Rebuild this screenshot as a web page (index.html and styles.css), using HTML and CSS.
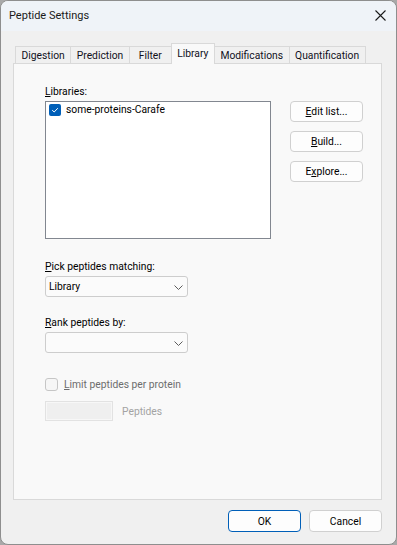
FILE: index.html
```html
<!DOCTYPE html>
<html lang="en">
<head>
  <meta charset="UTF-8" />
  <title>Peptide Settings</title>
  <link rel="stylesheet" href="styles.css">
</head>
<body>
  <div class="window">
    <div class="titlebar">
      <span class="title">Peptide Settings</span>
      <svg class="close" width="11" height="11" viewBox="0 0 11 11">
        <path d="M0.5 0.5 L10.5 10.5 M10.5 0.5 L0.5 10.5" stroke="#1a1a1a" stroke-width="1.1" fill="none"/>
      </svg>
    </div>
    <div class="content">
      <div class="tabs">
        <div class="tab">Digestion</div>
        <div class="tab">Prediction</div>
        <div class="tab">Filter</div>
        <div class="tab active">Library</div>
        <div class="tab">Modifications</div>
        <div class="tab">Quantification</div>
      </div>
      <div class="panel">
        <div class="label"><u>L</u>ibraries:</div>
        <div class="lib-row">
          <div class="listbox">
            <div class="list-item">
              <span class="check on">
                <svg width="12" height="12" viewBox="0 0 12 12"><path d="M3.2 6.2 L5.2 8 L8.8 4.2" stroke="#fff" stroke-width="1" fill="none"/></svg>
              </span>
              some-proteins-Carafe
            </div>
          </div>
          <div class="side-buttons">
            <button class="btn"><u>E</u>dit list...</button>
            <button class="btn"><u>B</u>uild...</button>
            <button class="btn">E<u>x</u>plore...</button>
          </div>
        </div>

        <div class="label pick"><u>P</u>ick peptides matching:</div>
        <div class="combo">
          <span>Library</span>
          <svg width="9" height="5" viewBox="0 0 9 5"><path d="M0.5 0.5 L4.5 4.5 L8.5 0.5" stroke="#5c5c5c" stroke-width="1" fill="none"/></svg>
        </div>

        <div class="label rank"><u>R</u>ank peptides by:</div>
        <div class="combo">
          <span></span>
          <svg width="9" height="5" viewBox="0 0 9 5"><path d="M0.5 0.5 L4.5 4.5 L8.5 0.5" stroke="#5c5c5c" stroke-width="1" fill="none"/></svg>
        </div>

        <div class="limit-row">
          <span class="check disabled"></span>
          <span class="disabled-text"><u>L</u>imit peptides per protein</span>
        </div>
        <div class="count-row">
          <div class="textbox"></div>
          <span class="muted">Peptides</span>
        </div>
      </div>
      <div class="footer">
        <button class="btn wide ok">OK</button>
        <button class="btn wide">Cancel</button>
      </div>
    </div>
  </div>
</body>
</html>
```

FILE: styles.css
```css
html, body {
  margin: 0;
  padding: 0;
  background-color: #a9a9a9;
}
body {
  font-family: "Segoe UI", Roboto, Arial, sans-serif;
  font-size: 10.3px;
  line-height: 13px;
  color: #000;
}
.window {
  width: 397px;
  height: 545px;
  box-sizing: border-box;
  border: 1px solid #8e8e8e;
  border-radius: 8px;
  background-color: #f0f0f0;
  overflow: hidden;
}
.titlebar {
  display: flex;
  justify-content: space-between;
  height: 30px;
  box-sizing: border-box;
  padding: 7px 10px 0 8px;
  background-color: #eff3f8;
}
.title {
  font-size: 11px;
  line-height: 16px;
  color: #1a1a1a;
}
.close {
  margin-top: 2px;
}
.content {
  padding: 12px 14px 0 12px;
}
.tabs {
  display: flex;
  align-items: flex-end;
  padding-left: 2px;
}
.tab {
  min-width: 43px;
  height: 17px;
  box-sizing: border-box;
  padding: 2px 5.5px 1px 5.5px;
  border: 1px solid #d9d9d9;
  border-bottom: none;
  margin-right: -1px;
  background-color: #f0f0f0;
  color: #10101c;
  text-align: center;
  white-space: nowrap;
}
.tab.active {
  position: relative;
  z-index: 1;
  height: 21px;
  padding-top: 3px;
  margin-bottom: -1px;
  background-color: #f9f9f9;
}
.panel {
  height: 437px;
  box-sizing: border-box;
  border: 1px solid #d9d9d9;
  background-color: #f9f9f9;
  padding: 21px 0 0 31px;
}
.label {
  margin-bottom: 3px;
}
.label.pick {
  margin-top: 21px;
}
.label.rank {
  margin-top: 19px;
}
.lib-row {
  display: flex;
  align-items: flex-start;
}
.listbox {
  width: 226px;
  height: 138px;
  box-sizing: border-box;
  border: 1px solid #828790;
  background-color: #fff;
  padding: 1px 3px;
}
.list-item {
  display: flex;
  align-items: center;
  gap: 5px;
}
.check {
  display: inline-block;
  width: 12px;
  height: 12px;
  box-sizing: border-box;
  border-radius: 2px;
}
.check.on {
  background-color: #005fb8;
}
.check.on svg {
  display: block;
}
.check.disabled {
  width: 13px;
  height: 13px;
  border: 1px solid #c6c6c6;
  border-radius: 3px;
  background-color: #f6f6f6;
}
.side-buttons {
  display: flex;
  flex-direction: column;
  gap: 9px;
  margin-left: 19px;
}
.btn {
  width: 73px;
  height: 21px;
  padding: 0;
  box-sizing: border-box;
  border: 1px solid #d0d0d0;
  border-radius: 4px;
  background-color: #fdfdfd;
  font-family: inherit;
  font-size: 10.3px;
  line-height: 13px;
  color: #000;
}
.btn.wide {
  height: 22px;
}
.btn.ok {
  border-color: #005fb8;
}
.combo {
  display: flex;
  align-items: center;
  justify-content: space-between;
  width: 143px;
  height: 21px;
  box-sizing: border-box;
  padding: 0 4px 0 3px;
  border: 1px solid #cdcdcd;
  border-radius: 3px;
  background-color: #fbfbfb;
}
.combo svg {
  margin-top: 1px;
}
.limit-row {
  display: flex;
  align-items: center;
  gap: 6px;
  margin-top: 25px;
}
.disabled-text {
  color: #6d6d6d;
}
.count-row {
  display: flex;
  align-items: center;
  gap: 9px;
  margin-top: 10px;
}
.textbox {
  width: 68px;
  height: 20px;
  box-sizing: border-box;
  border: 1px solid #e2e2e2;
  box-shadow: inset 0 0 0 1px #f7f7f7;
  background-color: #efefef;
}
.muted {
  color: #a3a3a3;
}
.footer {
  display: flex;
  justify-content: flex-end;
  gap: 8px;
  margin-top: 10px;
}
```
